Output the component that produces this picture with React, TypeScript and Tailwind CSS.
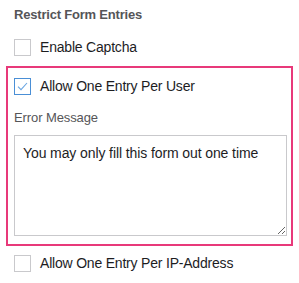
import { useState } from 'react'

function Box({ checked }: { checked?: boolean }) {
  return (
    <span
      className={`flex h-[17px] w-[17px] shrink-0 items-center justify-center border bg-white ${
        checked ? 'border-[#4a8fd6]' : 'border-[#c9c9cc]'
      }`}
    >
      {checked && (
        <svg width="11" height="9" viewBox="0 0 11 9" fill="none">
          <path d="M1 4.6 L4 7.6 L10 1" stroke="#6aa6e2" strokeWidth="1.1" />
        </svg>
      )}
    </span>
  )
}

function Option({ label, checked }: { label: string; checked?: boolean }) {
  return (
    <label className="flex h-[17px] items-center gap-[9px] text-[14px] tracking-[-0.2px] text-[#1d1d1f]">
      <Box checked={checked} />
      <span>{label}</span>
    </label>
  )
}

export default function App() {
  const [message, setMessage] = useState('You may only fill this form out one time')

  return (
    <div
      className="h-[283px] w-[299px] bg-white pt-[7px]"
      style={{ fontFamily: '"Liberation Sans", Arial, sans-serif' }}
    >
      <p className="pl-[14px] text-[13px] leading-[16px] font-bold tracking-[-0.2px] text-[#555558]">
        Restrict Form Entries
      </p>
      <div className="mt-[16px] pl-[14px]">
        <Option label="Enable Captcha" />
      </div>
      <div className="mt-[10px] ml-[6px] h-[180px] w-[287px] border-2 border-[#e8397a] pt-[10px] pl-[6px]">
        <Option label="Allow One Entry Per User" checked />
        <p className="mt-[15px] text-[13px] leading-[16px] tracking-[-0.1px] text-[#555558]">Error Message</p>
        <textarea
          value={message}
          onChange={(e) => setMessage(e.target.value)}
          className="mt-[9px] block h-[101px] w-[273px] border border-[#c9c9cc] px-[8px] pt-[7px] text-[14px] leading-[20px] tracking-[-0.1px] text-[#1d1d1f] outline-none"
        />
      </div>
      <div className="mt-[9px] pl-[14px]">
        <Option label="Allow One Entry Per IP-Address" />
      </div>
    </div>
  )
}
